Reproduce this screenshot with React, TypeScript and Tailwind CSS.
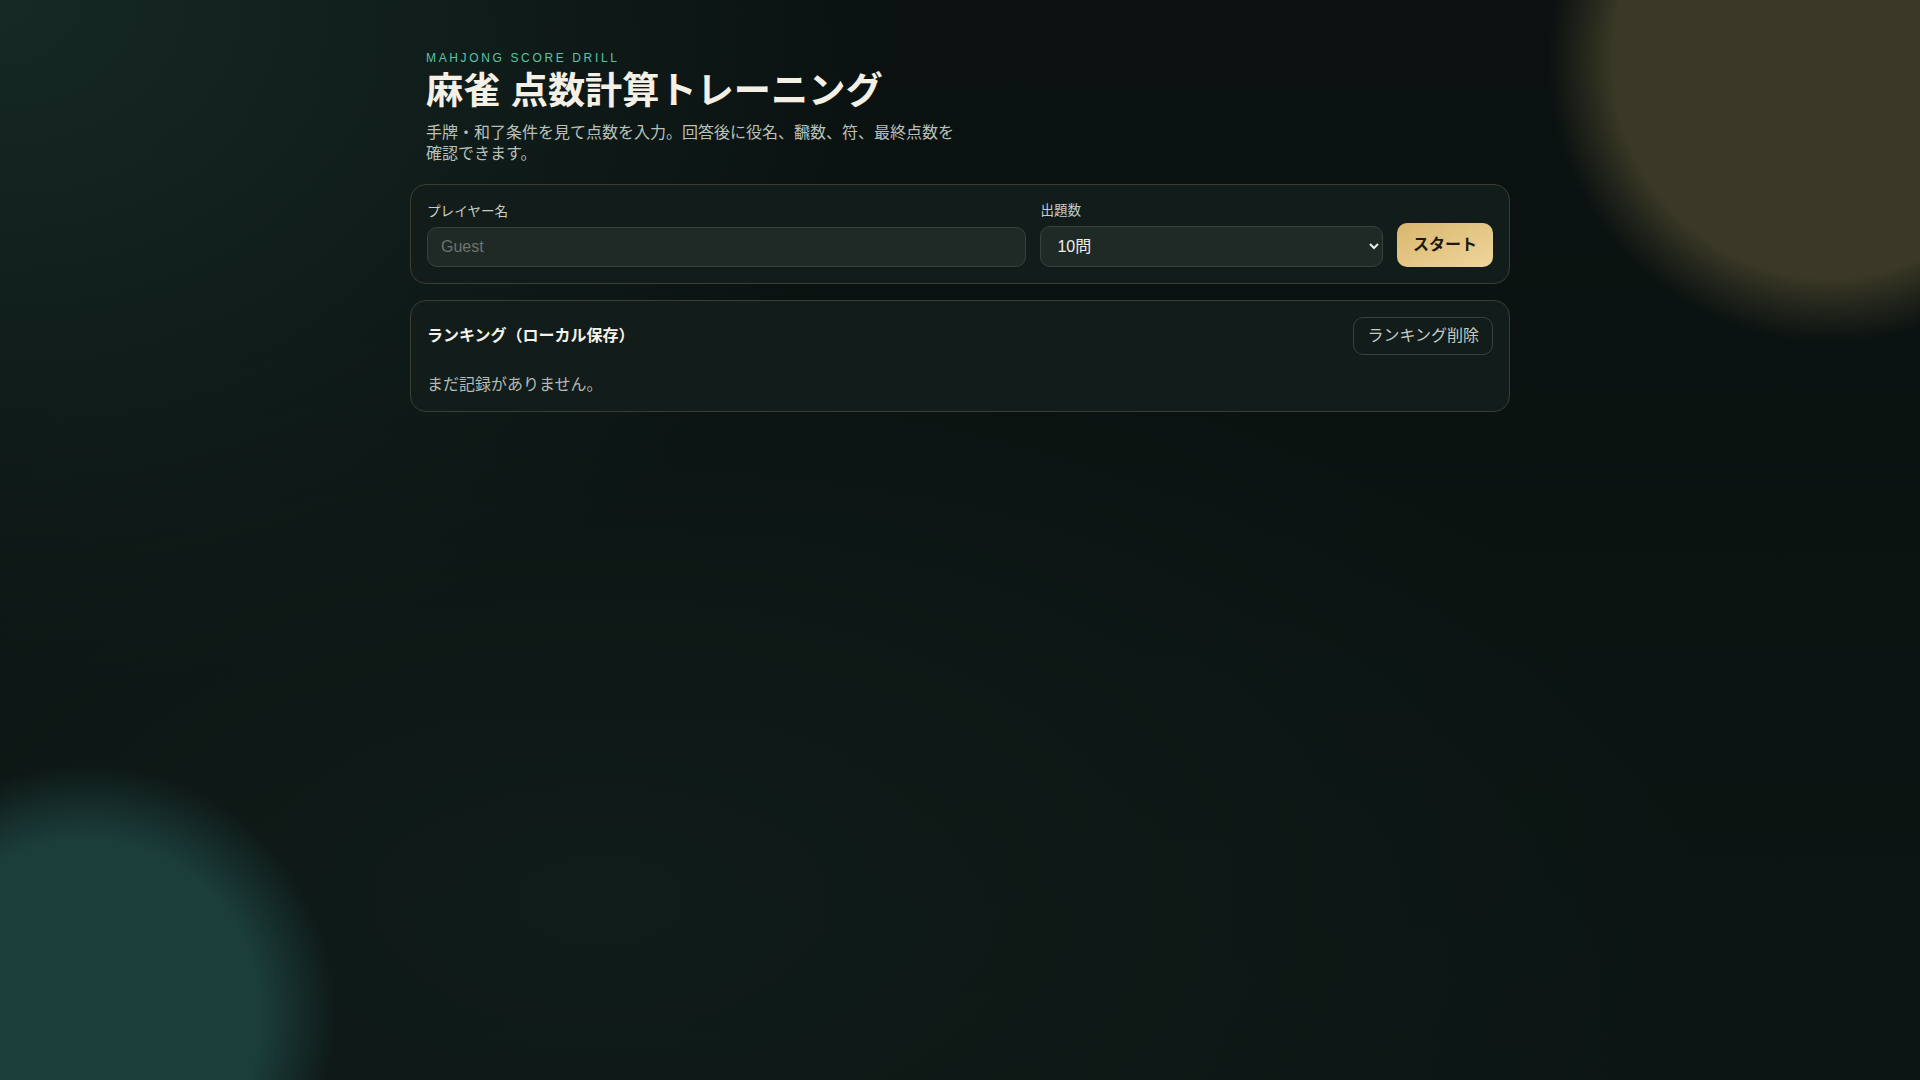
import React from "react";

export default function App() {
  return (
    <div className="min-h-screen w-full bg-[#0b1211] bg-[radial-gradient(circle_at_1830px_60px,#3a3826_0px,#3a3826_218px,rgba(58,56,38,0.5)_248px,rgba(58,56,38,0)_282px),radial-gradient(circle_at_85px_1015px,#1b3e3b_0px,#1b3e3b_175px,rgba(27,62,59,0.5)_213px,rgba(27,62,59,0)_250px),radial-gradient(ellipse_900px_700px_at_0px_0px,#162925_0%,rgba(22,41,37,0)_100%),radial-gradient(ellipse_1100px_600px_at_600px_900px,rgba(18,32,29,0.7)_0%,rgba(18,32,29,0)_100%),linear-gradient(180deg,#0a1110_0%,#0c1513_100%)] font-['Liberation_Sans','Noto_Sans_CJK_JP',sans-serif] text-[#eef0ea]">
      <div className="mx-auto max-w-[1100px] pt-[50px] pb-12">
        <header className="px-4">
          <p className="mb-[3px] text-[12px] leading-[16px] tracking-[0.22em] text-[#5cc3a6]">
            MAHJONG SCORE DRILL
          </p>
          <h1 className="text-[37.2px] leading-[44px] font-bold text-[#f4f0e6]">
            麻雀 点数計算トレーニング
          </h1>
          <p className="mt-[9px] max-w-[540px] text-[16px] leading-[21px] text-[#b9c0ba]">
            手牌・和了条件を見て点数を入力。回答後に役名、飜数、符、最終点数を確認できます。
          </p>
        </header>

        <section className="mt-[20px] rounded-2xl border border-[#393e2f] bg-[#121c1a] p-4">
          <div className="flex items-end gap-[14px]">
            <label className="flex flex-[1.75] min-w-0 flex-col gap-1.5">
              <span className="text-[13.6px] leading-[19px] text-[#c8cec8]">プレイヤー名</span>
              <input
                type="text"
                placeholder="Guest"
                className="h-10 w-full rounded-[10px] border border-[#37423d] bg-[#1f2926] px-[13px] text-[16px] text-[#eef0ea] outline-none placeholder:text-[#6c7570]"
              />
            </label>
            <label className="flex flex-1 min-w-0 flex-col gap-1.5">
              <span className="text-[13.6px] leading-[19px] text-[#c8cec8]">出題数</span>
              <select
                defaultValue="10"
                className="h-[41px] w-full rounded-[10px] border border-[#37423d] bg-[#1f2926] px-3 text-[16px] text-[#eef0ea] outline-none"
              >
                <option value="5" className="bg-[#1f2926]">5問</option>
                <option value="10" className="bg-[#1f2926]">10問</option>
                <option value="20" className="bg-[#1f2926]">20問</option>
              </select>
            </label>
            <button className="h-11 shrink-0 rounded-[10px] bg-linear-to-br from-[#d8b76e] to-[#f0d69c] px-4 text-[16px] leading-[20px] font-bold text-[#1b1a12]">
              スタート
            </button>
          </div>
        </section>

        <section className="mt-4 rounded-2xl border border-[#393e2f] bg-[#121c1a] p-4">
          <div className="flex items-center justify-between">
            <h2 className="text-[16px] font-bold text-[#f4f2ea]">ランキング（ローカル保存）</h2>
            <button className="h-[38px] rounded-[10px] border border-[#37423d] bg-transparent px-[13px] text-[16px] leading-[20px] text-[#c5ccc6]">
              ランキング削除
            </button>
          </div>
          <p className="mt-[19px] text-[16px] leading-[21px] text-[#b4bbb5]">まだ記録がありません。</p>
        </section>
      </div>
    </div>
  );
}
